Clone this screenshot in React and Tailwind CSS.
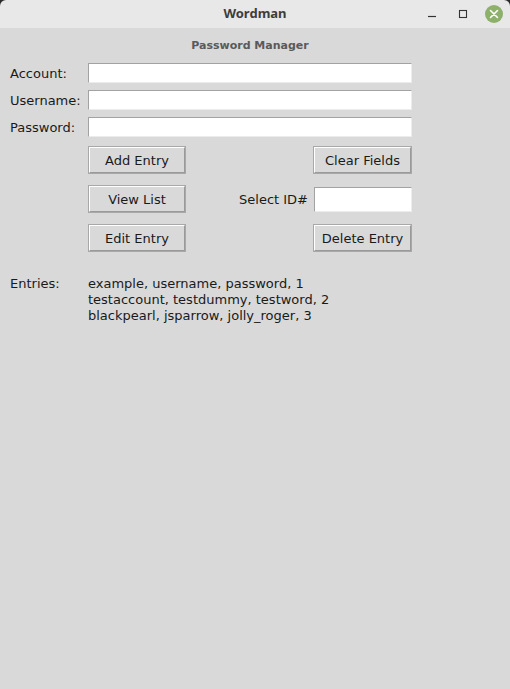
export default function App() {
  const font = { fontFamily: '"DejaVu Sans", sans-serif' };
  const Entry = ({ w = 'w-[324px]', h = 'h-[20px]' }) => (
    <div className={`${w} ${h} bg-white border border-t-[#a2a2a2] border-l-[#a2a2a2] border-b-[#ececec] border-r-[#ececec]`} />
  );
  const Btn = ({ children, w = 'w-[98px]' }) => (
    <div className={`${w} h-[28px] border border-[#a8a8a8] bg-[#d9d9d9] flex`}>
      <div className="flex-1 flex items-center justify-center leading-[16px] pt-[1px] border-t border-l border-t-white border-l-white border-b border-r border-b-[#9a9a9a] border-r-[#9a9a9a] text-[13px] text-[#1a1a1a]">
        {children}
      </div>
    </div>
  );
  return (
    <div className="w-[510px] h-[689px] bg-[#2a2a2a] overflow-hidden" style={font}>
      <div className="h-[28px] bg-[#e8e8e8] rounded-t-[6px] relative flex items-center justify-center">
        <span className="text-[13px] font-bold text-[#3d3d3d]" style={{ fontFamily: '"Noto Sans", sans-serif' }}>Wordman</span>
        <div className="absolute right-0 top-0 h-[28px] flex items-center">
          <svg width="12" height="12" viewBox="0 0 12 12" className="mr-[19px]">
            <line x1="2" y1="8.5" x2="10" y2="8.5" stroke="#333" strokeWidth="1.2" />
          </svg>
          <svg width="12" height="12" viewBox="0 0 12 12" className="mr-[16px]">
            <rect x="2.5" y="2.5" width="7" height="7" fill="none" stroke="#333" strokeWidth="1.1" />
          </svg>
          <svg width="18" height="18" viewBox="0 0 18 18" className="mr-[7px]">
            <circle cx="9" cy="9" r="9" fill="#8db06b" />
            <path d="M5.5 5.5 L12.5 12.5 M12.5 5.5 L5.5 12.5" stroke="white" strokeWidth="1.6" strokeLinecap="round" />
          </svg>
        </div>
      </div>
      <div className="h-[661px] bg-[#d9d9d9] text-[13px] leading-[16px] text-[#1a1a1a]">
        <div className="h-[35px] pt-[10px] pr-[10px] text-center text-[11px] leading-[16px] font-bold text-[#5a5a5a]">Password Manager</div>
        <div className="flex flex-col gap-[7px]">
          {['Account:', 'Username:', 'Password:'].map((l) => (
            <div key={l} className="flex items-center h-[20px]">
              <div className="w-[88px] pl-[10px] leading-[20px] h-[20px] pt-[1px]">{l}</div>
              <Entry />
            </div>
          ))}
        </div>
        <div className="pl-[88px] mt-[9px] flex flex-col gap-[11px] w-[412px]">
          <div className="flex justify-between items-center h-[28px]">
            <Btn>Add Entry</Btn>
            <Btn w="w-[99px]">Clear Fields</Btn>
          </div>
          <div className="flex justify-between items-center h-[28px]">
            <Btn>View List</Btn>
            <div className="flex items-center">
              <span className="mr-[6px] pt-[1px]">Select ID#</span>
              <Entry w="w-[98px]" h="h-[25px]" />
            </div>
          </div>
          <div className="flex justify-between items-center h-[28px]">
            <Btn>Edit Entry</Btn>
            <Btn w="w-[99px]">Delete Entry</Btn>
          </div>
        </div>
        <div className="flex mt-[24px] leading-[16px]">
          <div className="w-[88px] pl-[10px]">Entries:</div>
          <div>
            <div>example, username, password, 1</div>
            <div>testaccount, testdummy, testword, 2</div>
            <div>blackpearl, jsparrow, jolly_roger, 3</div>
          </div>
        </div>
      </div>
    </div>
  );
}
